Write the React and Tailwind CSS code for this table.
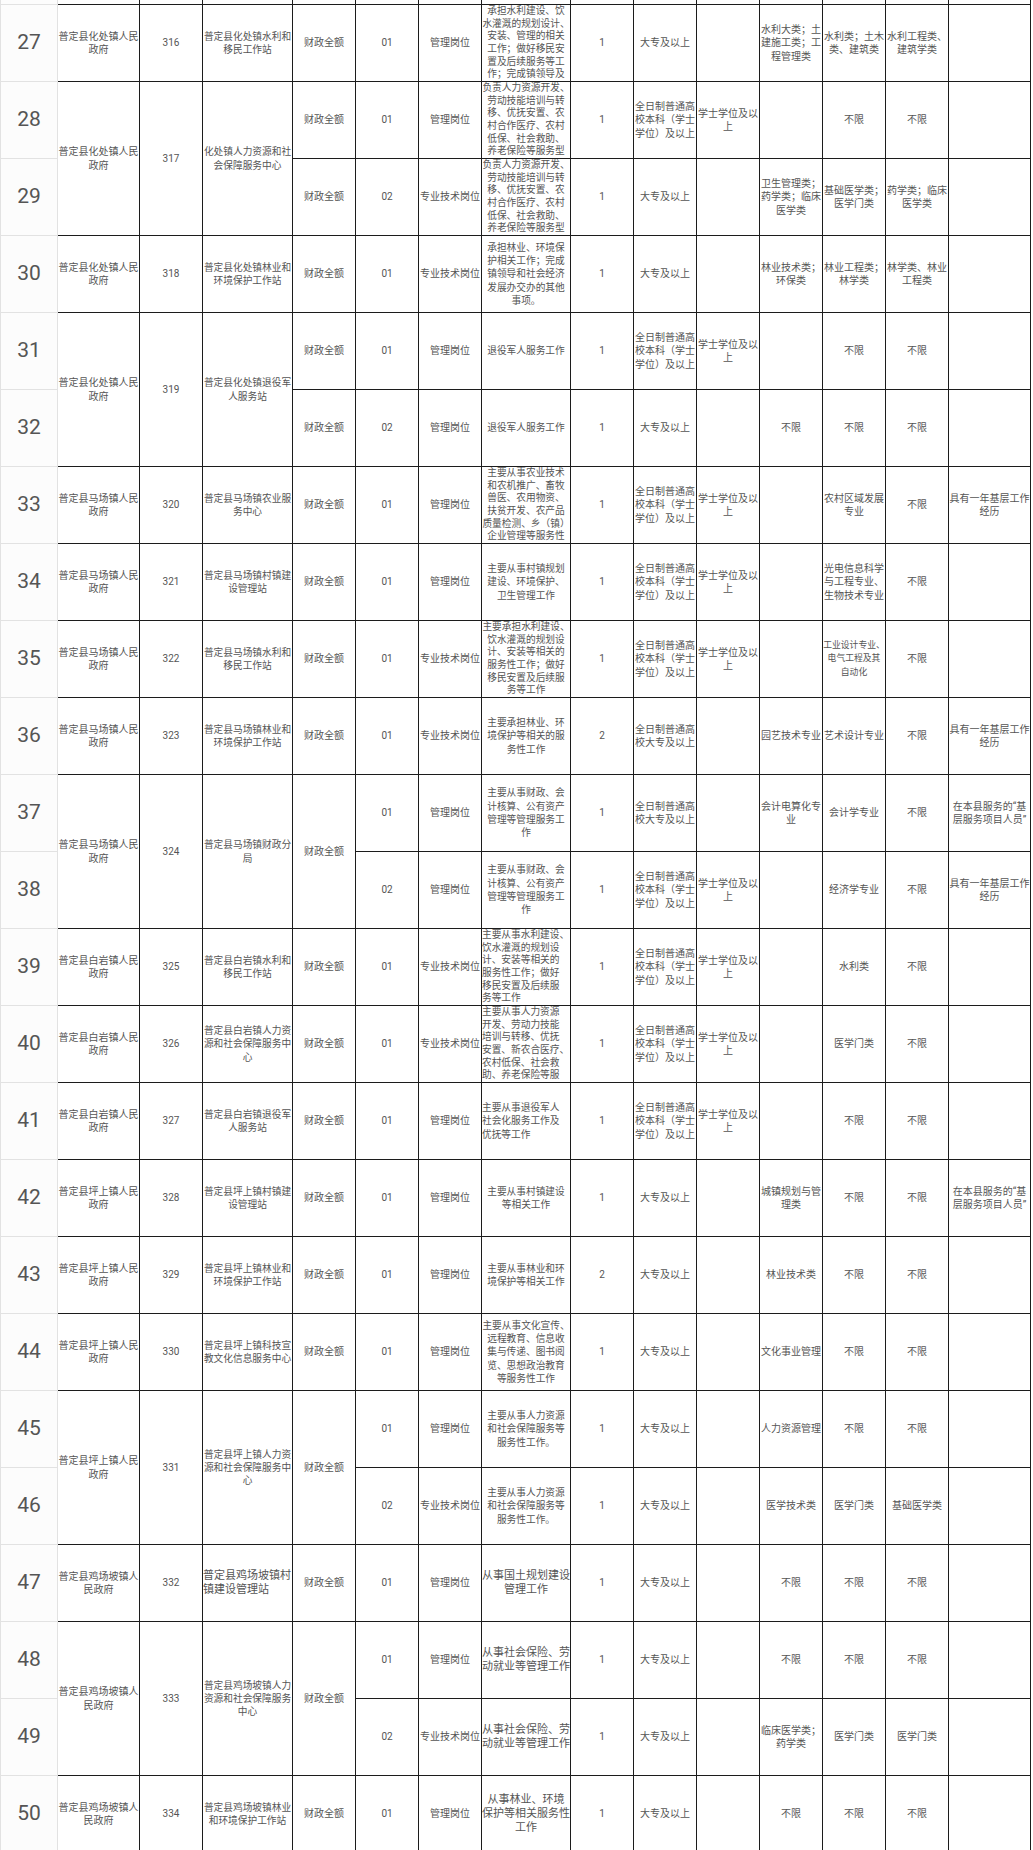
const FONT = { fontFamily: 'Roboto, "Noto Sans CJK SC", sans-serif' };

// spanLeft: 3 = cols 主管部门/代码/单位 merged with next row, 4 = also 经费形式
const rows = [
  { n: 27, dept: '普定县化处镇人民\n政府', code: '316', unit: '普定县化处镇水利和\n移民工作站', fund: '财政全额', pos: '01', type: '管理岗位',
    desc: '承担水利建设、饮\n水灌溉的规划设计、\n安装、管理的相关\n工作；做好移民安\n置及后续服务等工\n作；完成镇领导及', num: '1', edu: '大专及以上', deg: '',
    m1: '水利大类；土\n建施工类；工\n程管理类', m2: '水利类；土木\n类、建筑类', m3: '水利工程类、\n建筑学类', other: '' },
  { n: 28, spanLeft: 3, dept: '普定县化处镇人民\n政府', code: '317', unit: '化处镇人力资源和社\n会保障服务中心', fund: '财政全额', pos: '01', type: '管理岗位',
    desc: '负责人力资源开发、\n劳动技能培训与转\n移、优抚安置、农\n村合作医疗、农村\n低保、社会救助、\n养老保险等服务型', num: '1', edu: '全日制普通高\n校本科（学士\n学位）及以上', deg: '学士学位及以\n上',
    m1: '', m2: '不限', m3: '不限', other: '' },
  { n: 29, merged: 3, fund: '财政全额', pos: '02', type: '专业技术岗位',
    desc: '负责人力资源开发、\n劳动技能培训与转\n移、优抚安置、农\n村合作医疗、农村\n低保、社会救助、\n养老保险等服务型', num: '1', edu: '大专及以上', deg: '',
    m1: '卫生管理类；\n药学类；临床\n医学类', m2: '基础医学类；\n医学门类', m3: '药学类；临床\n医学类', other: '' },
  { n: 30, dept: '普定县化处镇人民\n政府', code: '318', unit: '普定县化处镇林业和\n环境保护工作站', fund: '财政全额', pos: '01', type: '专业技术岗位',
    desc: '承担林业、环境保\n护相关工作；完成\n镇领导和社会经济\n发展办交办的其他\n事项。', num: '1', edu: '大专及以上', deg: '',
    m1: '林业技术类；\n环保类', m2: '林业工程类；\n林学类', m3: '林学类、林业\n工程类', other: '' },
  { n: 31, spanLeft: 3, dept: '普定县化处镇人民\n政府', code: '319', unit: '普定县化处镇退役军\n人服务站', fund: '财政全额', pos: '01', type: '管理岗位',
    desc: '退役军人服务工作', num: '1', edu: '全日制普通高\n校本科（学士\n学位）及以上', deg: '学士学位及以\n上',
    m1: '', m2: '不限', m3: '不限', other: '' },
  { n: 32, merged: 3, fund: '财政全额', pos: '02', type: '管理岗位',
    desc: '退役军人服务工作', num: '1', edu: '大专及以上', deg: '',
    m1: '不限', m2: '不限', m3: '不限', other: '' },
  { n: 33, dept: '普定县马场镇人民\n政府', code: '320', unit: '普定县马场镇农业服\n务中心', fund: '财政全额', pos: '01', type: '管理岗位',
    desc: '主要从事农业技术\n和农机推广、畜牧\n兽医、农用物资、\n扶贫开发、农产品\n质量检测、乡（镇）\n企业管理等服务性', num: '1', edu: '全日制普通高\n校本科（学士\n学位）及以上', deg: '学士学位及以\n上',
    m1: '', m2: '农村区域发展\n专业', m3: '不限', other: '具有一年基层工作\n经历' },
  { n: 34, dept: '普定县马场镇人民\n政府', code: '321', unit: '普定县马场镇村镇建\n设管理站', fund: '财政全额', pos: '01', type: '管理岗位',
    desc: '主要从事村镇规划\n建设、环境保护、\n卫生管理工作', num: '1', edu: '全日制普通高\n校本科（学士\n学位）及以上', deg: '学士学位及以\n上',
    m1: '', m2: '光电信息科学\n与工程专业、\n生物技术专业', m3: '不限', other: '' },
  { n: 35, dept: '普定县马场镇人民\n政府', code: '322', unit: '普定县马场镇水利和\n移民工作站', fund: '财政全额', pos: '01', type: '专业技术岗位',
    desc: '主要承担水利建设、\n饮水灌溉的规划设\n计、安装等相关的\n服务性工作；做好\n移民安置及后续服\n务等工作', num: '1', edu: '全日制普通高\n校本科（学士\n学位）及以上', deg: '学士学位及以\n上',
    m1: '', m2: '工业设计专业、\n电气工程及其\n自动化', m2Small: true, m3: '不限', other: '' },
  { n: 36, dept: '普定县马场镇人民\n政府', code: '323', unit: '普定县马场镇林业和\n环境保护工作站', fund: '财政全额', pos: '01', type: '专业技术岗位',
    desc: '主要承担林业、环\n境保护等相关的服\n务性工作', num: '2', edu: '全日制普通高\n校大专及以上', deg: '',
    m1: '园艺技术专业', m2: '艺术设计专业', m3: '不限', other: '具有一年基层工作\n经历' },
  { n: 37, spanLeft: 4, dept: '普定县马场镇人民\n政府', code: '324', unit: '普定县马场镇财政分\n局', fund: '财政全额', pos: '01', type: '管理岗位',
    desc: '主要从事财政、会\n计核算、公有资产\n管理等管理服务工\n作', num: '1', edu: '全日制普通高\n校大专及以上', deg: '',
    m1: '会计电算化专\n业', m2: '会计学专业', m3: '不限', other: '在本县服务的“基\n层服务项目人员”' },
  { n: 38, merged: 4, pos: '02', type: '管理岗位',
    desc: '主要从事财政、会\n计核算、公有资产\n管理等管理服务工\n作', num: '1', edu: '全日制普通高\n校本科（学士\n学位）及以上', deg: '学士学位及以\n上',
    m1: '', m2: '经济学专业', m3: '不限', other: '具有一年基层工作\n经历' },
  { n: 39, dept: '普定县白岩镇人民\n政府', code: '325', unit: '普定县白岩镇水利和\n移民工作站', fund: '财政全额', pos: '01', type: '专业技术岗位',
    desc: '主要从事水利建设、\n饮水灌溉的规划设\n计、安装等相关的\n服务性工作；做好\n移民安置及后续服\n务等工作', descLeft: true, num: '1', edu: '全日制普通高\n校本科（学士\n学位）及以上', deg: '学士学位及以\n上',
    m1: '', m2: '水利类', m3: '不限', other: '' },
  { n: 40, dept: '普定县白岩镇人民\n政府', code: '326', unit: '普定县白岩镇人力资\n源和社会保障服务中\n心', fund: '财政全额', pos: '01', type: '专业技术岗位',
    desc: '主要从事人力资源\n开发、劳动力技能\n培训与转移、优抚\n安置、新农合医疗、\n农村低保、社会救\n助、养老保险等服', descLeft: true, num: '1', edu: '全日制普通高\n校本科（学士\n学位）及以上', deg: '学士学位及以\n上',
    m1: '', m2: '医学门类', m3: '不限', other: '' },
  { n: 41, dept: '普定县白岩镇人民\n政府', code: '327', unit: '普定县白岩镇退役军\n人服务站', fund: '财政全额', pos: '01', type: '管理岗位',
    desc: '主要从事退役军人\n社会化服务工作及\n优抚等工作', descLeft: true, num: '1', edu: '全日制普通高\n校本科（学士\n学位）及以上', deg: '学士学位及以\n上',
    m1: '', m2: '不限', m3: '不限', other: '' },
  { n: 42, dept: '普定县坪上镇人民\n政府', code: '328', unit: '普定县坪上镇村镇建\n设管理站', fund: '财政全额', pos: '01', type: '管理岗位',
    desc: '主要从事村镇建设\n等相关工作', num: '1', edu: '大专及以上', deg: '',
    m1: '城镇规划与管\n理类', m2: '不限', m3: '不限', other: '在本县服务的“基\n层服务项目人员”' },
  { n: 43, dept: '普定县坪上镇人民\n政府', code: '329', unit: '普定县坪上镇林业和\n环境保护工作站', fund: '财政全额', pos: '01', type: '管理岗位',
    desc: '主要从事林业和环\n境保护等相关工作', num: '2', edu: '大专及以上', deg: '',
    m1: '林业技术类', m2: '不限', m3: '不限', other: '' },
  { n: 44, dept: '普定县坪上镇人民\n政府', code: '330', unit: '普定县坪上镇科技宣\n教文化信息服务中心', fund: '财政全额', pos: '01', type: '管理岗位',
    desc: '主要从事文化宣传、\n远程教育、信息收\n集与传递、图书阅\n览、思想政治教育\n等服务性工作', num: '1', edu: '大专及以上', deg: '',
    m1: '文化事业管理', m2: '不限', m3: '不限', other: '' },
  { n: 45, spanLeft: 4, dept: '普定县坪上镇人民\n政府', code: '331', unit: '普定县坪上镇人力资\n源和社会保障服务中\n心', fund: '财政全额', pos: '01', type: '管理岗位',
    desc: '主要从事人力资源\n和社会保障服务等\n服务性工作。', num: '1', edu: '大专及以上', deg: '',
    m1: '人力资源管理', m2: '不限', m3: '不限', other: '' },
  { n: 46, merged: 4, pos: '02', type: '专业技术岗位',
    desc: '主要从事人力资源\n和社会保障服务等\n服务性工作。', num: '1', edu: '大专及以上', deg: '',
    m1: '医学技术类', m2: '医学门类', m3: '基础医学类', other: '' },
  { n: 47, dept: '普定县鸡场坡镇人\n民政府', code: '332', unit: '普定县鸡场坡镇村\n镇建设管理站', unitBig: true, fund: '财政全额', pos: '01', type: '管理岗位',
    desc: '从事国土规划建设\n管理工作', descBig: true, num: '1', edu: '大专及以上', deg: '',
    m1: '不限', m2: '不限', m3: '不限', other: '' },
  { n: 48, spanLeft: 4, dept: '普定县鸡场坡镇人\n民政府', code: '333', unit: '普定县鸡场坡镇人力\n资源和社会保障服务\n中心', fund: '财政全额', pos: '01', type: '管理岗位',
    desc: '从事社会保险、劳\n动就业等管理工作', descBig: true, num: '1', edu: '大专及以上', deg: '',
    m1: '不限', m2: '不限', m3: '不限', other: '' },
  { n: 49, merged: 4, pos: '02', type: '专业技术岗位',
    desc: '从事社会保险、劳\n动就业等管理工作', descBig: true, num: '1', edu: '大专及以上', deg: '',
    m1: '临床医学类；\n药学类', m2: '医学门类', m3: '医学门类', other: '' },
  { n: 50, dept: '普定县鸡场坡镇人\n民政府', code: '334', unit: '普定县鸡场坡镇林业\n和环境保护工作站', fund: '财政全额', pos: '01', type: '管理岗位',
    desc: '从事林业、环境\n保护等相关服务性\n工作', descBig: true, num: '1', edu: '大专及以上', deg: '',
    m1: '不限', m2: '不限', m3: '不限', other: '' },
];

function Cell({ children, span, left, big, small, narrow }) {
  // six-line texts are packed a little tighter so they stay inside the 77px row
  const tight = typeof children === 'string' && children.split('\n').length >= 6;
  return (
    <div
      className={[
        'flex items-center overflow-hidden whitespace-pre border-r border-b border-[#1c1c1c] text-[#555]',
        span ? 'row-span-2' : '',
        left ? 'justify-start text-left' : 'justify-center text-center',
        big
          ? 'text-[11px] leading-[13.7px]'
          : small
          ? 'text-[8.8px] leading-[13.3px]'
          : narrow && tight
          ? 'text-[9.7px] leading-[12.6px]'
          : narrow
          ? 'text-[9.7px] leading-[13.3px]'
          : tight
          ? 'text-[10px] leading-[12.6px]'
          : 'text-[10px] leading-[13.3px]',
      ].join(' ')}
    >
      {children}
    </div>
  );
}

function RowNum({ n }) {
  return (
    <div className="flex items-center justify-center border-l border-r border-b border-[#e2e2e2] bg-[#fcfcfc] text-[21px] text-[#555]">
      {n}
    </div>
  );
}

export default function App() {
  return (
    <div className="w-[1033px] h-[1850px] overflow-hidden bg-white" style={FONT}>
      <div className="grid grid-cols-[58px_82px_63px_90px_63px_63px_63px_89px_63px_63px_63px_63px_63px_63px_82px] grid-rows-[5px_repeat(24,77px)]">
        {/* tail of the row above */}
        <div className="border-l border-r border-b border-[#e2e2e2] bg-[#fcfcfc]" />
        {Array.from({ length: 14 }).map((_, i) => (
          <div key={i} className="border-r border-b border-[#1c1c1c]" />
        ))}

        {rows.map((r) => {
          const cells = [<RowNum key="n" n={r.n} />];
          if (!r.merged) {
            const s = !!r.spanLeft;
            cells.push(
              <Cell key="dept" span={s}>{r.dept}</Cell>,
              <Cell key="code" span={s}>{r.code}</Cell>,
              <Cell key="unit" span={s} left={r.unitBig} big={r.unitBig} narrow>{r.unit}</Cell>,
              <Cell key="fund" span={r.spanLeft === 4}>{r.fund}</Cell>,
            );
          } else if (r.merged === 3) {
            cells.push(<Cell key="fund">{r.fund}</Cell>);
          }
          cells.push(
            <Cell key="pos">{r.pos}</Cell>,
            <Cell key="type">{r.type}</Cell>,
            <Cell key="desc" left={r.descLeft} big={r.descBig} narrow>{r.desc}</Cell>,
            <Cell key="num">{r.num}</Cell>,
            <Cell key="edu">{r.edu}</Cell>,
            <Cell key="deg">{r.deg}</Cell>,
            <Cell key="m1">{r.m1}</Cell>,
            <Cell key="m2" small={r.m2Small}>{r.m2}</Cell>,
            <Cell key="m3">{r.m3}</Cell>,
            <Cell key="other">{r.other}</Cell>,
          );
          return cells;
        })}
      </div>
    </div>
  );
}
